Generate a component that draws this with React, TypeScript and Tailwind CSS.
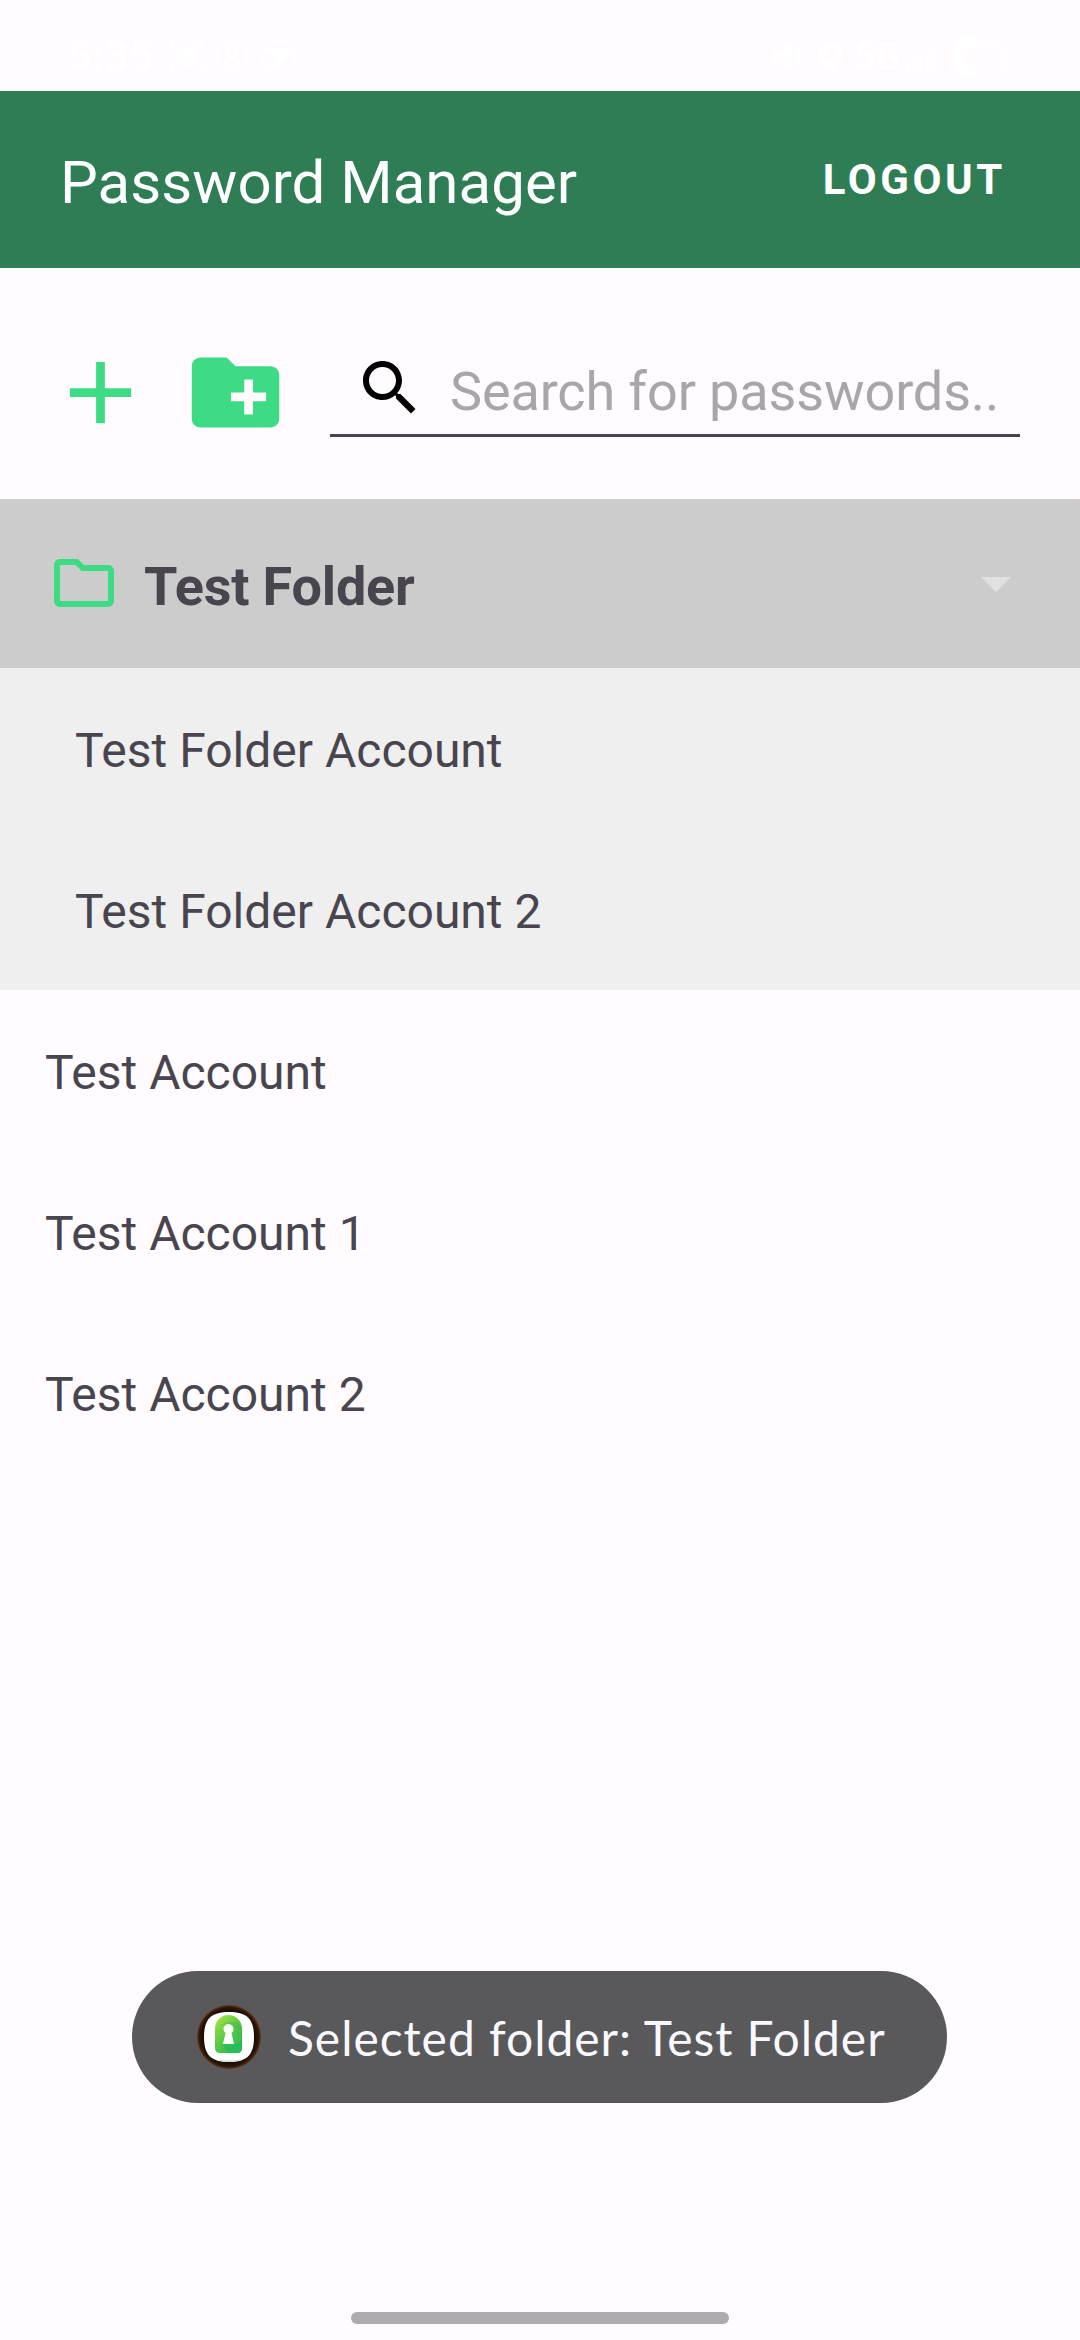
import React from "react";

function StatusBar() {
  return (
    <div className="flex h-[91px] items-center justify-between pt-[22px] pl-[68px] pr-[68px] text-white">
      <div className="flex items-center">
        <span className="w-[101px] font-['Roboto'] text-[41px] leading-none font-bold tracking-[1px]">5:35</span>
        <svg className="size-[34px]" viewBox="0 0 34 34" fill="none" stroke="currentColor" strokeWidth="3">
          <path d="M2 10V6a4 4 0 0 1 4-4h4M24 2h4a4 4 0 0 1 4 4v4M32 24v4a4 4 0 0 1-4 4h-4M10 32H6a4 4 0 0 1-4-4v-4" />
          <rect x="9" y="10" width="16" height="14" rx="3" />
          <path d="m9 19 6-3 4 2 6-4V10H9z" fill="currentColor" stroke="none" />
        </svg>
        <svg className="ml-3 size-[34px]" viewBox="0 0 34 34" fill="none" stroke="currentColor" strokeWidth="2">
          <circle cx="17" cy="17" r="15.5" />
          <path d="M12 8h10v4l-4 5 4 5v4H12v-4l4-5-4-5z" strokeWidth="3" />
        </svg>
        <svg className="ml-3 size-[36px]" viewBox="0 0 36 36" fill="none" stroke="currentColor" strokeWidth="2">
          <circle cx="18" cy="18" r="16.5" />
          <path d="M5 9h20l4 6-8 9-12 7 7-13-11-4z" fill="currentColor" stroke="none" />
        </svg>
      </div>
      <div className="flex items-center">
        <svg className="h-[30px] w-[30px]" viewBox="0 0 30 30" fill="currentColor">
          <path d="M0 9h8L19 1v28L8 21H0z" />
          <path d="m24 4 3 5-3 5 3 5-3 6" fill="none" stroke="currentColor" strokeWidth="3" />
          <path d="m1 1 18 27" stroke="#fffbff" strokeWidth="2" />
        </svg>
        <svg className="ml-[15px] h-[30px] w-6" viewBox="0 0 24 30" fill="currentColor">
          <path fillRule="evenodd" d="M12 0A12 12 0 0 0 0 12c0 8 12 18 12 18s12-10 12-18A12 12 0 0 0 12 0Zm0 7a5 5 0 1 1 0 10 5 5 0 0 1 0-10Z" />
        </svg>
        <span className="ml-[13px] w-[52px] font-['Roboto'] text-[36px] leading-none font-bold">5G</span>
        <svg className="h-[28px] w-[28px]" viewBox="0 0 28 28" fill="currentColor">
          <path d="M0 22h4v6H0zM6 17h4v11H6zM12 12h4v16h-4z" />
          <path d="M18 6h4v22h-4zM24 0h4v28h-4z" opacity="0.7" />
        </svg>
        <span className="ml-4 flex h-[42px] w-[61px] items-center justify-center rounded-full bg-linear-to-r from-white from-41% to-white/40 to-41% font-['Roboto'] text-[32px] leading-none font-bold text-[#fffbff]">41</span>
      </div>
    </div>
  );
}

function Toolbar() {
  return (
    <header className="flex h-[177px] items-center justify-between bg-[#2e7d55] pr-[74px] pl-[60px] text-white">
      <h1 className="pt-[6px] text-[60px] leading-none tracking-[0.04px]">Password Manager</h1>
      <button className="text-[42px] leading-none font-bold tracking-[3.6px]">LOGOUT</button>
    </header>
  );
}

function SearchRow() {
  return (
    <div className="flex h-[231px] items-start pt-[72px] pl-12 text-[#3ddc84]">
      <svg className="size-[105px]" viewBox="0 0 24 24" fill="currentColor">
        <path d="M19 13h-6v6h-2v-6H5v-2h6V5h2v6h6v2z" />
      </svg>
      <svg className="ml-[30px] size-[105px]" viewBox="0 0 24 24" fill="currentColor">
        <path d="M20 6h-8l-2-2H4c-1.11 0-1.99.89-1.99 2L2 18c0 1.11.89 2 2 2h16c1.11 0 2-.89 2-2V8c0-1.11-.89-2-2-2zm-1 8h-3v3h-2v-3h-3v-2h3V9h2v3h3v2z" />
      </svg>
      <label className="ml-[42px] flex h-[97px] w-[690px] items-center border-b-3 border-[#49454f] pl-6">
        <svg className="mt-px size-[72px] text-black" viewBox="0 0 24 24" fill="currentColor">
          <path d="M15.5 14l-.8 0-.3-.3c1-1.1 1.6-2.6 1.6-4.2C16 5.9 13.1 3 9.5 3S3 5.9 3 9.5 5.9 16 9.5 16c1.6 0 3.1-.6 4.2-1.6l.3.3v.8l5 5 1.5-1.5zM9.5 14C7 14 5 12 5 9.5S7 5 9.5 5 14 7 14 9.5 12 14 9.5 14z" />
        </svg>
        <span className="ml-6 pt-[9px] text-[54px] leading-none tracking-[-0.13px] whitespace-nowrap text-[#a8a6a9]">Search for passwords..</span>
      </label>
    </div>
  );
}

function FolderRow({ name }: { name: string }) {
  return (
    <div className="flex h-[169px] items-center bg-[#ccc] pl-12">
      <svg className="mb-px size-[72px] text-[#3ddc84]" viewBox="0 0 24 24" fill="currentColor">
        <path d="M9.17 6l2 2H20v10H4V6h5.17M10 4H4c-1.1 0-1.99.9-1.99 2L2 18c0 1.1.9 2 2 2h16c1.1 0 2-.9 2-2V8c0-1.1-.9-2-2-2h-8l-2-2z" />
      </svg>
      <span className="ml-6 grow pt-[6px] text-[54px] leading-none font-bold tracking-[-0.2px]">{name}</span>
      <svg className="mt-px mr-[69px] h-[15px] w-[30px] text-[#e1e1e1]" viewBox="0 0 30 15" fill="currentColor">
        <path d="M0 0h30L15 15z" />
      </svg>
    </div>
  );
}

function AccountRow({ name, nested = false }: { name: string; nested?: boolean }) {
  return (
    <div className={nested ? "flex h-[161px] items-center bg-[#efefef] pt-1 pl-[75px]" : "flex h-[161px] items-center pt-1 pl-[45px]"}>
      <span className="text-[48px] leading-none">{name}</span>
    </div>
  );
}

function AppIcon() {
  return (
    <svg className="size-16 shrink-0" viewBox="0 0 64 64">
      <defs>
        <radialGradient id="ring">
          <stop offset="0.8" stopColor="#160c06" />
          <stop offset="0.92" stopColor="#2c1508" />
          <stop offset="1" stopColor="#623818" />
        </radialGradient>
        <linearGradient id="lock" x1="0" y1="0" x2="0.7" y2="1">
          <stop offset="0" stopColor="#b5e545" />
          <stop offset="0.5" stopColor="#62cc43" />
          <stop offset="1" stopColor="#27bb5b" />
        </linearGradient>
        <linearGradient id="fold" x1="0" y1="1" x2="1" y2="0">
          <stop offset="0" stopColor="#70d542" />
          <stop offset="1" stopColor="#2fa83c" />
        </linearGradient>
      </defs>
      <circle cx="32" cy="32" r="32" fill="url(#ring)" />
      <path d="M32 7C50 7 57 14 57 32S50 57 32 57 7 50 7 32 14 7 32 7Z" fill="#fff" />
      <path d="M19 54q13 3 26 0-5 3-13 3t-13-3Z" fill="#d5d5d5" />
      <path d="M18 23.500a13.500 13.500 0 0 1 27 0v19.500q0 5-5 5H23q-5 0-5-5Z" fill="url(#lock)" />
      <path d="M18 28q3-9 13-9 8 1 9 9v7q-2 5-10 4 10 3 15-5v-9q-1-10-12-8-12 1-15 11Z" fill="url(#fold)" opacity="0.35" />
      <path d="M26 39q1 6 8 9h6q5 0 5-5v-7q-5 5-19 3Z" fill="#28bb5b" opacity="0.8" />
      <path d="M28.500 28a5 5 0 1 1 6 0l2.500 11H26Z" fill="#fff" />
    </svg>
  );
}

function Toast({ text }: { text: string }) {
  return (
    <div className="absolute top-[1971px] left-[132px] flex h-[132px] w-[815px] items-center rounded-full bg-[#59595b] pl-[65px]">
      <AppIcon />
      <span className="ml-[27px] pt-[2px] font-['Lato'] text-[48px] leading-none tracking-[0.95px] whitespace-nowrap text-[#faf8ff]">{text}</span>
    </div>
  );
}

export default function App() {
  return (
    <div className="relative flex h-[2340px] w-[1080px] flex-col overflow-hidden bg-[#fffbff] font-['Roboto',sans-serif] text-[#49454f]">
      <StatusBar />
      <Toolbar />
      <SearchRow />
      <main className="grow">
        <FolderRow name="Test Folder" />
        <AccountRow name="Test Folder Account" nested />
        <AccountRow name="Test Folder Account 2" nested />
        <AccountRow name="Test Account" />
        <AccountRow name="Test Account 1" />
        <AccountRow name="Test Account 2" />
      </main>
      <Toast text="Selected folder: Test Folder" />
      <div className="mb-4 h-3 w-[378px] self-center rounded-full bg-[#aeacae]" />
    </div>
  );
}
